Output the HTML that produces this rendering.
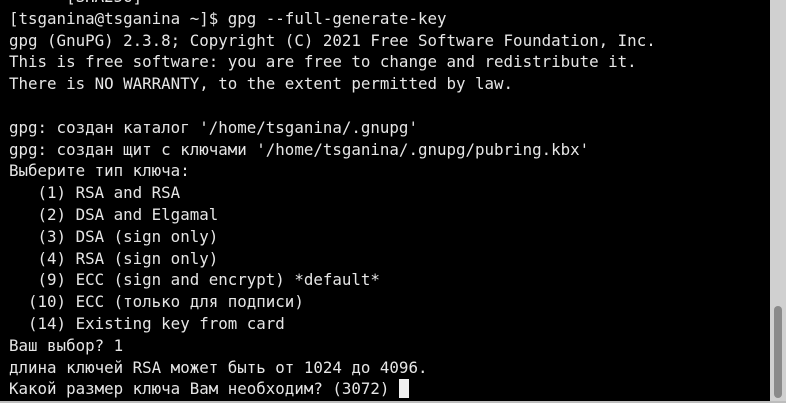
<!DOCTYPE html>
<html><head><meta charset="utf-8"><style>
html,body{margin:0;padding:0;background:#000;width:786px;height:403px;overflow:hidden;position:relative}
pre{position:absolute;left:9px;top:-14px;margin:0;font-family:"DejaVu Sans Mono","Liberation Mono",monospace;font-size:15.8px;line-height:21.8px;color:#e6e6e6;white-space:pre}
.cur{display:inline-block;width:10px;height:19px;background:#f0f0f0;vertical-align:-4px}
.sb{position:absolute;left:770px;top:0;width:16px;height:401px;background:#d0d0d0}
.th{position:absolute;left:774px;top:306px;width:8px;height:92px;border-radius:4px;background:#8a8a8a}
.bt{position:absolute;left:0;top:401px;width:786px;height:2px;background:#bdbdbd}
</style></head><body>
<pre>      [SHA256]
[tsganina@tsganina ~]$ gpg --full-generate-key
gpg (GnuPG) 2.3.8; Copyright (C) 2021 Free Software Foundation, Inc.
This is free software: you are free to change and redistribute it.
There is NO WARRANTY, to the extent permitted by law.

gpg: создан каталог '/home/tsganina/.gnupg'
gpg: создан щит с ключами '/home/tsganina/.gnupg/pubring.kbx'
Выберите тип ключа:
   (1) RSA and RSA
   (2) DSA and Elgamal
   (3) DSA (sign only)
   (4) RSA (sign only)
   (9) ECC (sign and encrypt) *default*
  (10) ECC (только для подписи)
  (14) Existing key from card
Ваш выбор? 1
длина ключей RSA может быть от 1024 до 4096.
Какой размер ключа Вам необходим? (3072) <span class="cur"></span></pre>
<div class="sb"></div><div class="th"></div><div class="bt"></div>
</body></html>
